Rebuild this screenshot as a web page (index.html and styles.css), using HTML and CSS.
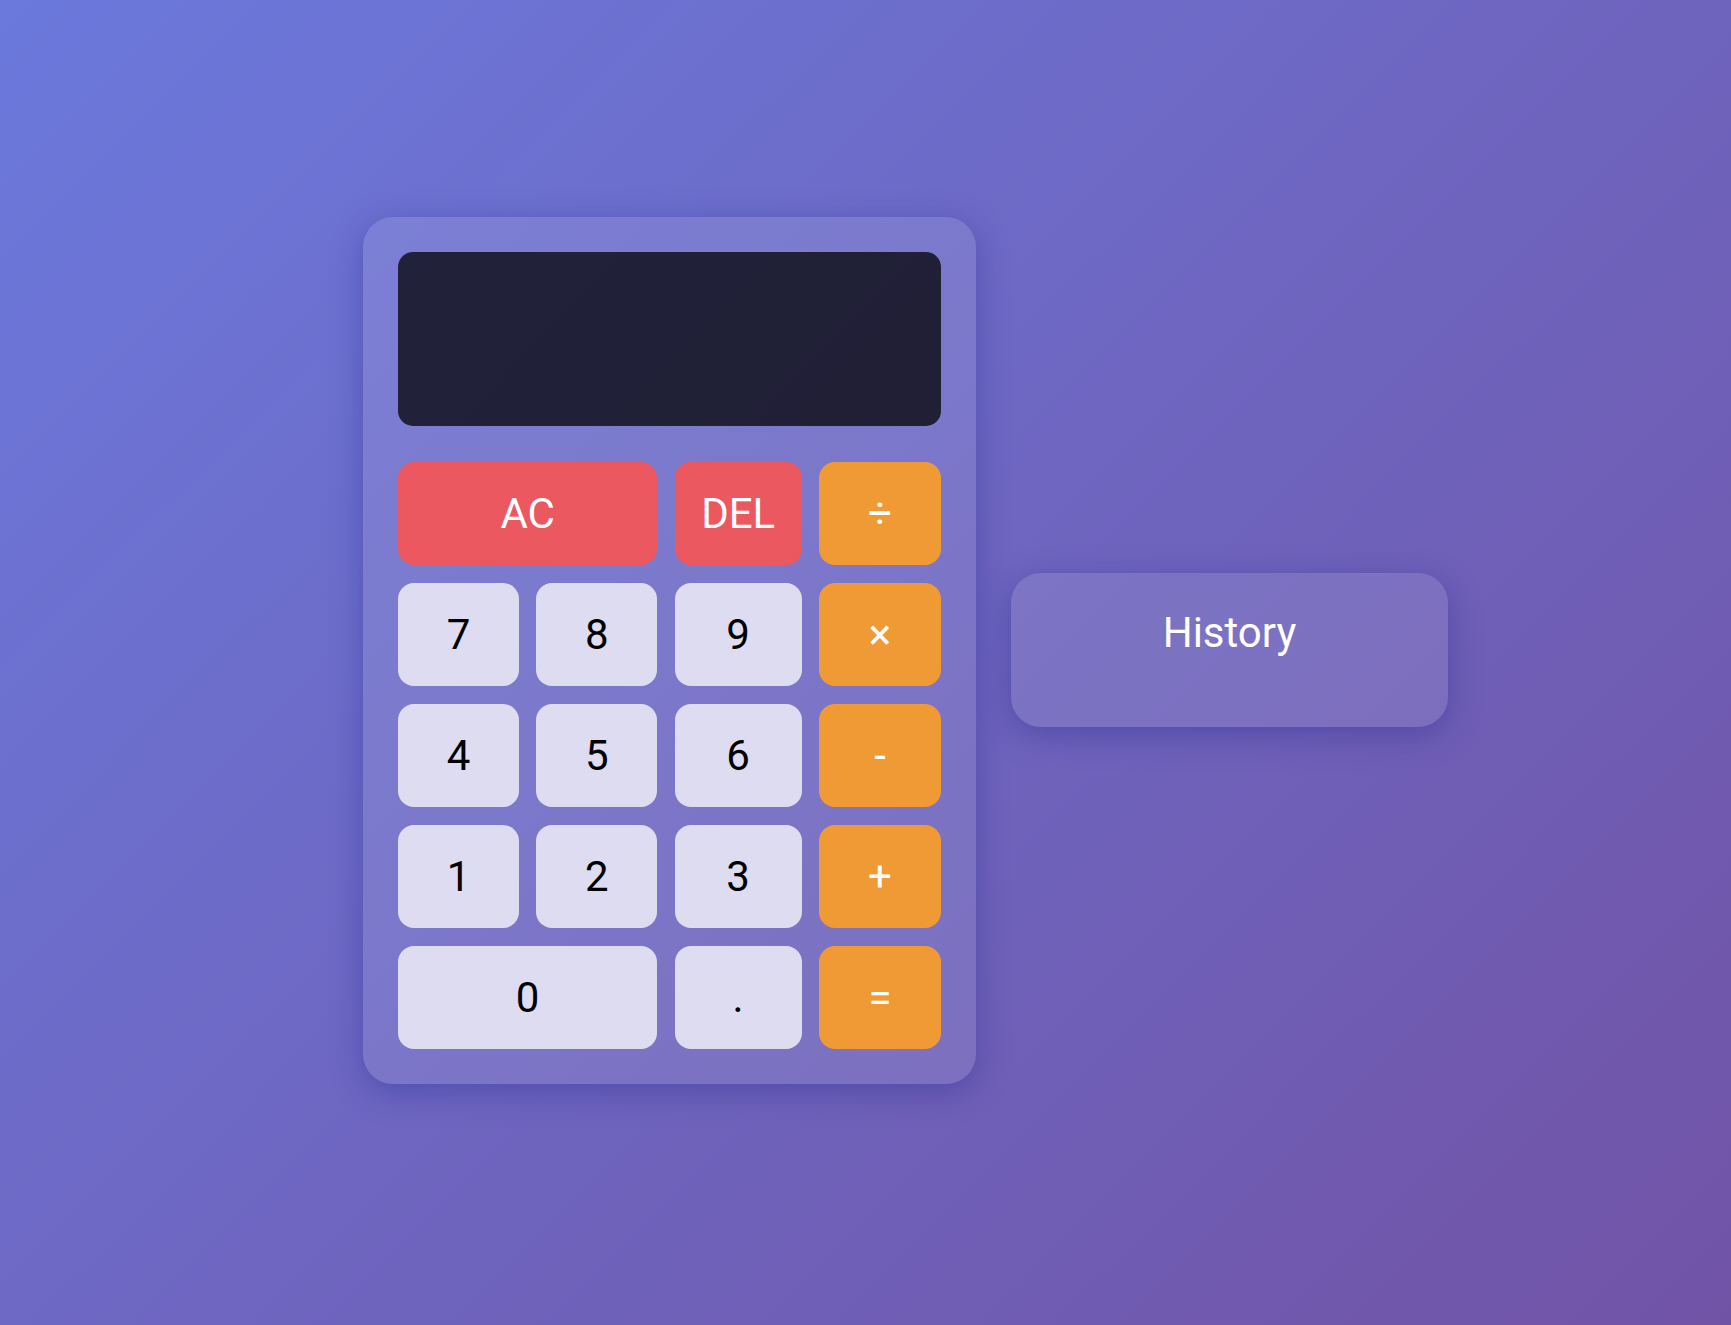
FILE: index.html
```html
<!DOCTYPE html>
<html lang="en">
<head>
<meta charset="utf-8">
<title>Calculator</title>
<link rel="stylesheet" href="styles.css">
</head>
<body>
<main class="app">
  <section class="calculator">
    <div class="display"></div>
    <div class="keys">
      <button class="key key-danger key-wide">AC</button>
      <button class="key key-danger">DEL</button>
      <button class="key key-op">÷</button>
      <button class="key">7</button>
      <button class="key">8</button>
      <button class="key">9</button>
      <button class="key key-op">×</button>
      <button class="key">4</button>
      <button class="key">5</button>
      <button class="key">6</button>
      <button class="key key-op">-</button>
      <button class="key">1</button>
      <button class="key">2</button>
      <button class="key">3</button>
      <button class="key key-op">+</button>
      <button class="key key-wide">0</button>
      <button class="key">.</button>
      <button class="key key-op">=</button>
    </div>
  </section>
  <aside class="history">
    <h2 class="history-title">History</h2>
    <ul class="history-list"></ul>
  </aside>
</main>
</body>
</html>
```
FILE: styles.css
```css
* { box-sizing: border-box; }
html, body { margin: 0; padding: 0; }
body {
  min-height: 100vh;
  font-family: Roboto, "Liberation Sans", sans-serif;
  background: linear-gradient(135deg, #6b79dc 0%, #7153a6 100%);
}
.app {
  min-height: 100vh;
  display: flex;
  align-items: center;
  justify-content: center;
  gap: 35px;
  padding: 0 0 25px 80px;
}
.calculator {
  width: 613px;
  padding: 35px;
  border-radius: 30px;
  background: rgba(255, 255, 255, 0.1);
  box-shadow: 0 8px 32px rgba(31, 38, 135, 0.37);
}
.display {
  height: 174px;
  margin-bottom: 36px;
  border-radius: 15px;
  background: linear-gradient(135deg, #21223a 0%, #201f36 100%);
}
.keys {
  display: grid;
  grid-template-columns: 121px 121px 127px 1fr;
  column-gap: 17.33px;
  row-gap: 18px;
}
.key {
  height: 103px;
  border: none;
  border-radius: 16px;
  background: #dedcf0;
  color: #000;
  font-family: Roboto, "Liberation Sans", sans-serif;
  font-size: 42px;
  font-weight: 400;
  padding: 0;
  cursor: pointer;
}
.key-wide { grid-column: span 2; }
.key-danger { background: #ec5860; color: #fff; }
.key-op { background: #f09a36; color: #fff; }
.history {
  width: 437px;
  padding: 35px;
  border-radius: 30px;
  background: rgba(255, 255, 255, 0.1);
  box-shadow: 0 8px 32px rgba(31, 38, 135, 0.37);
  color: #fff;
  text-align: center;
}
.history-title {
  margin: 0;
  font-size: 42px;
  font-weight: 400;
  line-height: normal;
}
.history-list {
  list-style: none;
  margin: 0;
  padding: 0;
  min-height: 35px;
}
```
